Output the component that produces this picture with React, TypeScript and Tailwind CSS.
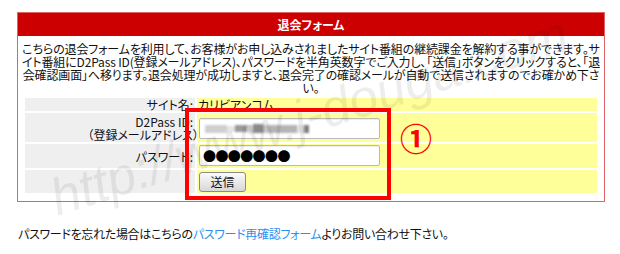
const jp = "[font-family:'Noto_Sans_CJK_JP','Noto_Sans',sans-serif] [font-feature-settings:'palt']";

const lines = [
  'こちらの退会フォームを利用して、お客様がお申し込みされましたサイト番組の継続課金を解約する事ができます。サ',
  'イト番組にD2Pass ID(登録メールアドレス)、パスワードを半角英数字でご入力し、「送信」ボタンをクリックすると、「退',
  '会確認画面」へ移ります。退会処理が成功しますと、退会完了の確認メールが自動で送信されますのでお確かめ下さ',
  'い。',
];

const BlurredId = () => (
  <div className="flex items-center h-[10px] blur-[1.2px]">
    <div className="w-[22px] h-[8px] bg-[#cfcfcf]" />
    <div className="w-[8px] h-[6px] bg-[#e4e4e4]" />
    <div className="w-[12px] h-[7px] bg-[#9a9a9a]" />
    <div className="w-[6px] h-[8px] bg-[#d6d6d6]" />
    <div className="w-[10px] h-[9px] bg-[#8a8a8a]" />
    <div className="w-[6px] h-[8px] bg-[#c4c4c4]" />
    <div className="w-[28px] h-[8px] bg-[#b4b4b4]" />
    <div className="w-[7px] h-[8px] bg-[#e6e6e6]" />
    <div className="w-[5px] h-[8px] bg-[#7f7f7f]" />
  </div>
);

export default function App() {
  return (
    <div className={`relative w-[620px] h-[254px] overflow-hidden bg-white text-[#111] ${jp}`}>
      {/* form table */}
      <div className="ml-[17px] mt-[12px] w-[588px] border border-[#e06464]">
        <div className="h-[23px] bg-[#cc0000] flex items-center justify-center text-white font-bold text-[12px]">
          退会フォーム
        </div>
        <div className="pt-[6px] text-center text-[12px] leading-[13px] tracking-[-0.14px]">
          {lines.map(l => (
            <div key={l} className="whitespace-nowrap">{l}</div>
          ))}
        </div>
        <div className="grid grid-cols-[170px_1fr] gap-[2px] px-[7px] pt-[4px] pb-[8px] text-[12px] leading-[13px]">
          {/* site name */}
          <div className="h-[13px] bg-[#efefef] text-right pr-[2px]">サイト名:</div>
          <div className="h-[13px] bg-[#ffff99] pl-[1px]">カリビアンコム</div>

          {/* D2Pass ID */}
          <div className="h-[29px] bg-[#efefef] text-right pr-[2px] pt-[2px]">
            <div>D2Pass ID:</div>
            <div className="-mr-[6px]">（登録メールアドレス）</div>
          </div>
          <div className="h-[29px] bg-[#ffff99] pl-[2px] pt-[5px]">
            <div className="w-[181px] h-[21px] bg-white border border-[#b9b9b9] rounded-[2px] shadow-[inset_0_1px_1px_rgba(0,0,0,0.08)] flex items-center pl-[5px]">
              <BlurredId />
            </div>
          </div>

          {/* password */}
          <div className="h-[24px] bg-[#efefef] text-right pr-[2px] flex items-center justify-end">パスワード:</div>
          <div className="h-[24px] bg-[#ffff99] pl-[2px] pt-[1px]">
            <div className="w-[181px] h-[21px] bg-white border border-[#b9b9b9] rounded-[2px] shadow-[inset_0_1px_1px_rgba(0,0,0,0.08)] flex items-center pl-[3px] text-[13px] tracking-[-0.6px] text-black leading-none [font-feature-settings:normal]">
              ●●●●●●●
            </div>
          </div>

          {/* submit */}
          <div className="h-[23px] bg-[#efefef]" />
          <div className="h-[23px] bg-[#ffff99] pl-[2px] pt-[2px]">
            <button className="w-[47px] h-[20px] border border-[#8a8a8a] rounded-[3px] bg-gradient-to-b from-[#fafafa] to-[#d8d8d8] text-[12px] leading-none text-[#111]">
              送信
            </button>
          </div>
        </div>
      </div>

      <div className="mt-[25px] ml-[18px] text-[12px] leading-[13px] tracking-[-0.3px] whitespace-nowrap">
        パスワードを忘れた場合はこちらの<span className="text-[#2b8ff0]">パスワード再確認フォーム</span>よりお問い合わせ下さい。
      </div>

      {/* watermark */}
      <div className="absolute left-[52px] top-[160px] -rotate-[18deg] origin-left text-[52px] italic text-black/[0.07] whitespace-nowrap pointer-events-none [font-family:'Liberation_Sans',sans-serif]">
        http://www.j-douga.com
      </div>

      {/* annotation */}
      <div className="absolute left-[185px] top-[108px] w-[206px] h-[92px] border-[4px] border-[#ff0000]" />
      <div className="absolute left-[400px] top-[121px] text-[32px] font-bold text-[#ff0000] leading-none">①</div>
    </div>
  );
}
